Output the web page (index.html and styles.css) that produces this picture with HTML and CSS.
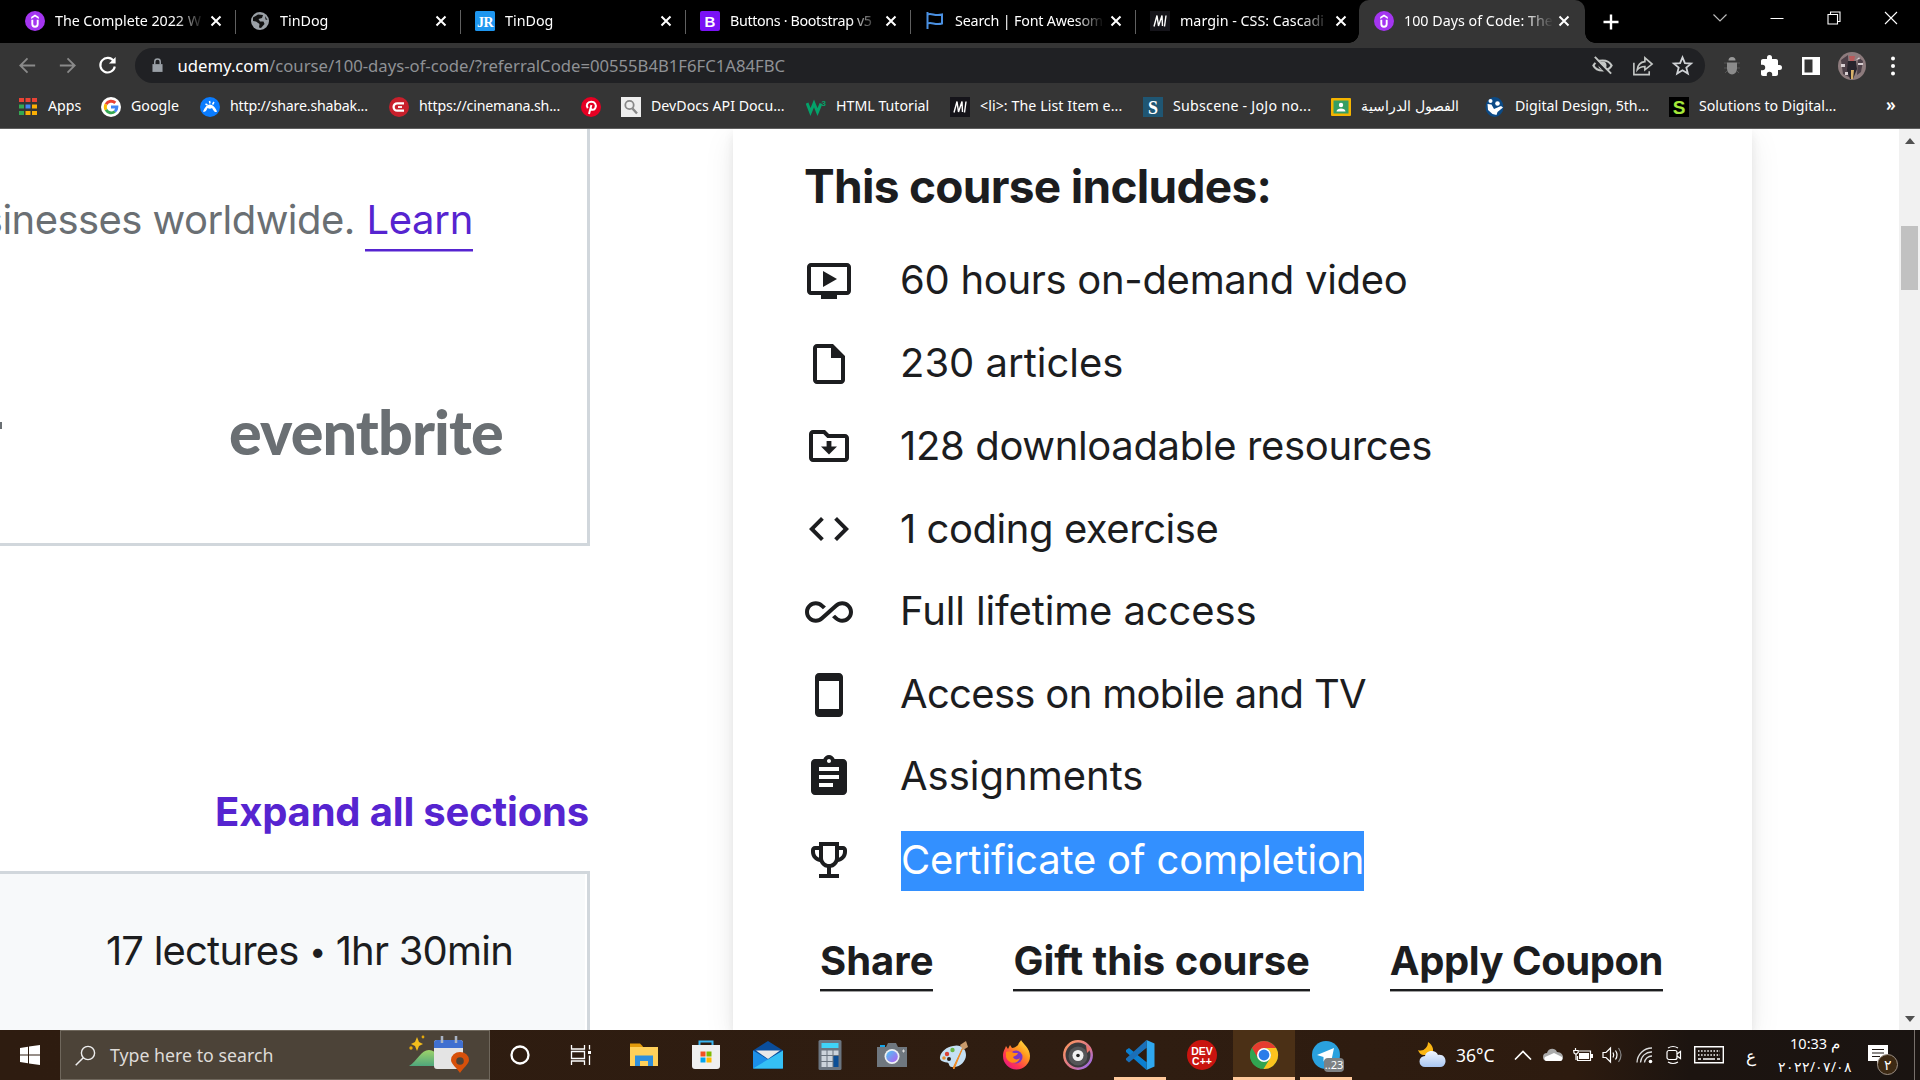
FILE: index.html
```html
<!DOCTYPE html>
<html lang="en">
<head>
<meta charset="utf-8">
<title>100 Days of Code</title>
<link rel="stylesheet" href="styles.css">
</head>
<body>
<svg width="0" height="0" class="defs">
  <defs>
    <symbol id="udemy" viewBox="0 0 20 20"><circle cx="10" cy="10" r="10" fill="#a435f0"/><path d="M6.200 6 10 3.500 13.800 6v2L10 5.600 6.200 8z" fill="#fff"/><path d="M7.300 8.800v4.200a2.700 2.700 0 0 0 5.400 0V8.800" fill="none" stroke="#fff" stroke-width="1.900"/></symbol>
    <symbol id="x" viewBox="0 0 12 12"><path d="M1.500 1.500l9 9M10.500 1.500l-9 9" stroke="#fff" stroke-width="2" fill="none"/></symbol>
    <symbol id="mdn" viewBox="0 0 20 20"><path d="M0 0h20v20H0z" fill="#15141a"/><path d="M4 15.500 7 4.500 8.500 15 12 4.500 12.500 15M16 4.500 14.500 15.500" fill="none" stroke="#fff" stroke-width="1.400"/></symbol>
    <linearGradient id="ff" x1="1" y1="0" x2="0.200" y2="1"><stop offset="0" stop-color="#fff44f"/><stop offset=".4" stop-color="#ff9a1e"/><stop offset=".75" stop-color="#ff3750"/><stop offset="1" stop-color="#e31587"/></linearGradient>
    <linearGradient id="mu" x1="0" y1="0" x2="1" y2="1"><stop offset="0" stop-color="#ff9a5c"/><stop offset=".6" stop-color="#d9738f"/><stop offset="1" stop-color="#8a6bff"/></linearGradient>
    <linearGradient id="ca" x1="0" y1="0" x2="1" y2="1"><stop offset="0" stop-color="#4cc8f4"/><stop offset="1" stop-color="#b45cf0"/></linearGradient>
    <linearGradient id="hill" x1="0" y1="0" x2="0" y2="1"><stop offset="0" stop-color="#9ed36a"/><stop offset="1" stop-color="#4fa67c"/></linearGradient>
    <linearGradient id="cloud" x1="0" y1="0" x2="0" y2="1"><stop offset="0" stop-color="#f2f7ff"/><stop offset="1" stop-color="#a9c6f2"/></linearGradient>
  </defs>
</svg>

<header class="tabs">
  <div class="tab"><svg class="fav"><use href="#udemy"/></svg><span class="title f1">The Complete 2022 W</span><svg class="close"><use href="#x"/></svg></div>
  <div class="tab"><svg class="fav" viewBox="0 0 20 20"><circle cx="10" cy="10" r="9" fill="#9aa0a6"/><path d="M3 6.500 8 3.500l5 .5-1 3-3.500 1 1.500 2.500h3.500l1 2.500-3.500 4-2-.5.5-3.500L6 10.500 3 10zM15 5l2.500 4-2-.500z" fill="#111"/></svg><span class="title">TinDog</span><svg class="close"><use href="#x"/></svg></div>
  <div class="tab"><svg class="fav" viewBox="0 0 20 20"><rect width="20" height="20" rx="1.500" fill="#1e96ef"/><text x="10" y="15.500" class="jr">JR</text></svg><span class="title">TinDog</span><svg class="close"><use href="#x"/></svg></div>
  <div class="tab"><svg class="fav" viewBox="0 0 20 20"><rect width="20" height="20" rx="2" fill="#7a12f5"/><text x="10" y="15.500" class="bs">B</text></svg><span class="title f4">Buttons · Bootstrap v5</span><svg class="close"><use href="#x"/></svg></div>
  <div class="tab"><svg class="fav" viewBox="0 0 20 20"><path d="M2.500 1v17M2.500 3.500c4-2 7 2 14.500 0v9c-7 2-10.500-2-14.500 0" fill="none" stroke="#4a90e2" stroke-width="2"/></svg><span class="title f5">Search | Font Awesom</span><svg class="close"><use href="#x"/></svg></div>
  <div class="tab"><svg class="fav"><use href="#mdn"/></svg><span class="title f6">margin - CSS: Cascadi</span><svg class="close"><use href="#x"/></svg></div>
  <div class="tab active"><svg class="fav"><use href="#udemy"/></svg><span class="title f7">100 Days of Code: The</span><svg class="close"><use href="#x"/></svg></div>
  <svg class="plus" viewBox="0 0 16 16"><path d="M8 .5v15M.5 8h15" stroke="#fff" stroke-width="2.400"/></svg>
  <div class="winctl">
    <svg viewBox="0 0 16 16"><path d="M1.500 4.500 8 11l6.500-6.500" fill="none" stroke="#bbb" stroke-width="1.200"/></svg>
    <svg viewBox="0 0 16 16"><path d="M1.500 8.500h13" stroke="#fff" stroke-width="1"/></svg>
    <svg viewBox="0 0 16 16"><path d="M2 4.500h9.500v9.500H2zM4.500 4.500V2H14v9.500h-2.500" fill="none" stroke="#fff" stroke-width="1.100"/></svg>
    <svg viewBox="0 0 16 16"><path d="M2 2l12 12M14 2 2 14" stroke="#fff" stroke-width="1.100"/></svg>
  </div>
</header>

<nav class="toolbar">
  <div class="navs">
    <svg viewBox="0 0 24 24" class="dim"><path d="M20 12H5M12 4.500 4.500 12l7.500 7.500" /></svg>
    <svg viewBox="0 0 24 24" class="dim"><path d="M4 12h15M12 4.500l7.500 7.500-7.500 7.500"/></svg>
    <svg viewBox="0 0 24 24"><path d="M18.500 7.500A7.600 7.600 0 1 0 19.600 13" stroke="#fff"/><path d="M20.500 3v7h-7z" fill="#fff"/></svg>
  </div>
  <div class="omni">
    <svg class="lock" viewBox="0 0 12 16"><path d="M.5 6.500h11V15H.5z" fill="#9aa0a6"/><path d="M3 7V4a3 3 0 0 1 6 0v3" fill="none" stroke="#9aa0a6" stroke-width="1.600"/></svg>
    <span class="url"><b>udemy.com</b>/course/100-days-of-code/?referralCode=00555B4B1F6FC1A84FBC</span>
    <div class="omni-icons">
      <svg viewBox="0 0 24 24"><path d="M2.500 12C6 5 18 5 21.500 12 18 19 6 19 2.500 12z" fill="none" stroke="#c4c7c5" stroke-width="2.200"/><circle cx="12" cy="12" r="4.200" fill="#c4c7c5"/><path d="M3 5.500 18.500 21" stroke="#202124" stroke-width="3"/><path d="M4 3 21 20.500" stroke="#c4c7c5" stroke-width="2"/></svg>
      <svg viewBox="0 0 24 24" fill="none" stroke="#c4c7c5" stroke-width="1.700"><path d="M3 9v12.500h16V18"/><path d="M6.500 16.500c.5-5 3.500-8 8-8.500V4l7.500 6.500-7.500 6V13c-3.500 0-6 1-8 3.500z"/></svg>
      <svg viewBox="0 0 24 24"><path d="M12 3.500l2.500 6 6.500.500-5 4.200 1.600 6.300L12 17l-5.600 3.500L8 14.200 3 10l6.500-.500z" fill="none" stroke="#d0d3d6" stroke-width="1.900"/></svg>
    </div>
  </div>
  <div class="ext">
    <svg viewBox="0 0 24 24"><path d="M4 9h3M4 14h3M17 9h3M17 14h3M5 19l2-2M19 19l-2-2" stroke="#555" stroke-width="1"/><path d="M8.500 6.500a3.500 3.500 0 0 1 7 0z" fill="#999"/><path d="M7 8.500h10v6a5 6 0 0 1-10 0z" fill="#8b8b8b"/></svg>
    <svg viewBox="0 0 24 24"><path d="M20.500 11H19V7c0-1.100-.9-2-2-2h-4V3.500a2.500 2.500 0 0 0-5 0V5H4c-1.100 0-2 .9-2 2v3.800h1.500a2.700 2.700 0 0 1 0 5.400H2V20c0 1.100.9 2 2 2h3.800v-1.500a2.700 2.700 0 0 1 5.400 0V22H17c1.100 0 2-.9 2-2v-4h1.500a2.500 2.500 0 0 0 0-5z" fill="#fff"/></svg>
    <svg viewBox="0 0 24 24"><path d="M3 3h18v18H3zM5.500 5.500v13h8v-13z" fill="#fff" fill-rule="evenodd"/></svg>
    <svg viewBox="0 0 28 28" class="ava"><circle cx="14" cy="14" r="14" fill="#8d7b7d"/><path d="M3 8l7-5 1 22-6-3zM20 5l5 4-2 11-4 3z" fill="#4d4048"/><path d="M10 9h8l1 8-4 10h-3l-3-9z" fill="#28242c"/><path d="M11 4h6l-1 5h-4z" fill="#b95b5c"/><path d="M13 18h3l-1 9h-2z" fill="#d9b169"/><path d="M3 12h4v3H3zM20 11h5v2h-5zM7 20h3v3H7zM18 8l3-3 1 2z" fill="#d8cfd2"/></svg>
    <svg viewBox="0 0 24 24"><g fill="#fff"><circle cx="12" cy="4.500" r="2"/><circle cx="12" cy="12" r="2"/><circle cx="12" cy="19.500" r="2"/></g></svg>
  </div>
</nav>

<nav class="marks">
  <a><svg viewBox="0 0 20 20"><g><path d="M0 1h5v4H0zM6.500 1h5v4h-5zM13 1h5v4h-5z" fill="#ea4335"/><path d="M0 7.500h5v4H0zM0 14h5v4H0z" fill="#34a853"/><path d="M6.500 7.500h5v4h-5z" fill="#4285f4"/><path d="M13 7.500h5v4h-5zM6.500 14h5v4h-5zM13 14h5v4h-5z" fill="#fbaf05"/></g></svg><span>Apps</span></a>
  <a><svg viewBox="0 0 20 20"><circle cx="10" cy="10" r="10" fill="#fff"/><g fill="none" stroke-width="2.900"><path d="M14.300 5.900A5.900 5.900 0 0 0 5 7.200" stroke="#ea4335"/><path d="M5 7.200a5.900 5.900 0 0 0 0 5.600" stroke="#fbbc05"/><path d="M5 12.800a5.900 5.900 0 0 0 8.900 1.700" stroke="#34a853"/><path d="M13.900 14.500A5.900 5.900 0 0 0 15.900 10H10" stroke="#4285f4"/></g></svg><span>Google</span></a>
  <a><svg viewBox="0 0 20 20"><circle cx="10" cy="10" r="10" fill="#0a7cff"/><path d="M3 14.500C5 9.500 8 7 10 7.500c2.500 0 5.500 3 7 7-2 1.500-3.500-.5-5-3.500-1 1-3 1-4.500 0C6.500 14 5 15.500 3 14.500z" fill="#fff"/><path d="M5.500 7l2 1M9.500 4l.5 2.500M14 5l-1.500 2.500" stroke="#fff" stroke-width="1.500"/></svg><span>http://share.shabak...</span></a>
  <a><svg viewBox="0 0 20 20"><circle cx="10" cy="10" r="10" fill="#c8202c"/><path d="M15 6.300H8.300a3.600 3.600 0 0 0 0 7.400H15" fill="none" stroke="#fff" stroke-width="2.300"/><path d="M9 10h4" stroke="#fff" stroke-width="1.800"/></svg><span>https://cinemana.sh...</span></a>
  <a><svg viewBox="0 0 20 20"><circle cx="10" cy="10" r="10" fill="#e60023"/><path d="M6.800 11.200C4.500 8 6.500 4.800 10.200 4.800c4 0 5.400 3.200 4.200 6-1.200 2.700-4 2.500-4.400.700M10.400 8 8 17" fill="none" stroke="#fff" stroke-width="2"/></svg></a>
  <a><svg viewBox="0 0 20 20"><path d="M0 0h20v20H0z" fill="#eee"/><circle cx="8.500" cy="8" r="4.200" fill="none" stroke="#888" stroke-width="1.800"/><path d="M11.500 11.500 16 16.500" stroke="#888" stroke-width="2.400"/></svg><span>DevDocs API Docu...</span></a>
  <a><svg viewBox="0 0 20 20"><path d="M1 6l3.500 9L8 6.500l3.500 8.500L15 6.500" fill="none" stroke="#04a26a" stroke-width="3"/><text x="15.500" y="8.500" class="w3">3</text></svg><span>HTML Tutorial</span></a>
  <a><svg><use href="#mdn"/></svg><span>&lt;li&gt;: The List Item e...</span></a>
  <a><svg viewBox="0 0 20 20"><path d="M0 0h20v20H0z" fill="#1f5673"/><text x="10" y="16.500" class="sub">S</text></svg><span>Subscene - JoJo no...</span></a>
  <a><svg viewBox="0 0 20 20"><rect y="1" width="20" height="18" rx="1" fill="#f4b400"/><path d="M2.500 3.500h15v13h-15z" fill="#359e63"/><circle cx="10" cy="8" r="2.200" fill="#fff"/><path d="M5.500 14.500c0-4 9-4 9 0z" fill="#fff"/></svg><span class="ar">الفصول الدراسية</span></a>
  <a><svg viewBox="0 0 20 20"><ellipse cx="9.500" cy="10" rx="9" ry="10" fill="#0b4a86"/><circle cx="5.500" cy="4" r="2" fill="#fff"/><circle cx="12.500" cy="6.500" r="2.300" fill="#fff"/><path d="M2.500 7l4 .5 2.500 4.500 7-3 2 1.500-5.500 4.500-1 3-4-1-4.500-4z" fill="#fff"/></svg><span>Digital Design, 5th...</span></a>
  <a><svg viewBox="0 0 20 20"><path d="M0 0h20v20H0z"/><text x="10" y="17" class="sol">S</text></svg><span>Solutions to Digital...</span></a>
  <a class="more">»</a>
</nav>

<main class="page">
  <section class="left">
    <div class="business">
      <p class="worldwide">sinesses worldwide. <a class="learn">Learn</a></p>
      <div class="logos"><i class="frag"></i><span class="eventbrite">eventbrite</span></div>
    </div>
    <div class="expand">Expand all sections</div>
    <div class="panel"><div class="panel-head">17 lectures <b>•</b> 1hr 30min</div></div>
  </section>
  <section class="card">
    <h2>This course includes:</h2>
    <ul>
      <li><svg viewBox="0 0 24 24"><path d="M21 3H3c-1.110 0-2 .89-2 2v12c0 1.100.89 2 2 2h5v2h8v-2h5c1.100 0 1.990-.9 1.990-2L23 5c0-1.110-.9-2-2-2zm0 14H3V5h18v12zm-5-6l-7 4V7z"/></svg><span>60 hours on-demand video</span></li>
      <li><svg viewBox="0 0 24 24"><path d="M6 2c-1.100 0-2 .9-2 2v16c0 1.100.9 2 2 2h12c1.100 0 2-.9 2-2V8l-6-6H6zm0 2h7v5h5v11H6V4z" fill-rule="evenodd"/></svg><span>230 articles</span></li>
      <li><svg viewBox="0 0 24 24"><path d="M20 6h-8l-2-2H4c-1.100 0-2 .9-2 2v12c0 1.100.9 2 2 2h16c1.100 0 2-.9 2-2V8c0-1.100-.9-2-2-2zm0 12H4V6h5.170l2 2H20v10zM12 16.200l-4-4h2.800v-2.700h2.400v2.700H16z" fill-rule="evenodd"/></svg><span>128 downloadable resources</span></li>
      <li><svg viewBox="0 0 24 24"><path d="M9.400 16.600L4.800 12l4.600-4.600L8 6l-6 6 6 6 1.400-1.400zm5.200 0l4.600-4.600-4.600-4.600L16 6l6 6-6 6-1.400-1.400z"/></svg><span>1 coding exercise</span></li>
      <li><svg viewBox="0 0 24 24"><path d="M18.600 6.620c-1.440 0-2.800.56-3.770 1.530L12 10.660 10.480 12h.01L7.800 14.390c-.64.64-1.490.99-2.400.99-1.870 0-3.390-1.510-3.390-3.380S3.530 8.620 5.400 8.620c.91 0 1.760.35 2.440 1.030l1.130 1 1.510-1.340L9.220 8.200C8.200 7.180 6.840 6.620 5.400 6.620 2.420 6.620 0 9.040 0 12s2.420 5.380 5.400 5.380c1.440 0 2.800-.56 3.770-1.530l2.830-2.500.01.01L13.520 12h-.01l2.690-2.390c.64-.64 1.490-.99 2.400-.99 1.870 0 3.390 1.510 3.390 3.380s-1.520 3.380-3.390 3.380c-.9 0-1.760-.35-2.440-1.030l-1.140-1.010-1.510 1.340 1.270 1.120c1.020 1.010 2.370 1.570 3.820 1.570 2.980 0 5.400-2.410 5.400-5.380s-2.420-5.370-5.400-5.370z"/></svg><span>Full lifetime access</span></li>
      <li><svg viewBox="0 0 24 24"><path d="M17 1.010L7 1c-1.100 0-2 .9-2 2v18c0 1.100.9 2 2 2h10c1.100 0 2-.9 2-2V3c0-1.100-.9-1.990-2-1.990zM17 19H7V5h10v14z"/></svg><span>Access on mobile and TV</span></li>
      <li><svg viewBox="0 0 24 24"><path d="M19 3h-4.180C14.400 1.840 13.300 1 12 1c-1.300 0-2.400.84-2.820 2H5c-1.100 0-2 .9-2 2v14c0 1.100.9 2 2 2h14c1.100 0 2-.9 2-2V5c0-1.100-.9-2-2-2zm-7 0c.55 0 1 .45 1 1s-.45 1-1 1-1-.45-1-1 .45-1 1-1zm2 14H7v-2h7v2zm3-4H7v-2h10v2zm0-4H7V7h10v2z"/></svg><span>Assignments</span></li>
      <li><svg viewBox="0 0 24 24"><path d="M19 5h-2V3H7v2H5c-1.100 0-2 .9-2 2v1c0 2.550 1.920 4.630 4.390 4.940.63 1.500 1.980 2.630 3.610 2.960V19H7v2h10v-2h-4v-3.100c1.630-.33 2.980-1.460 3.610-2.960C19.080 12.630 21 10.550 21 8V7c0-1.100-.9-2-2-2zM5 8V7h2v3.820C5.840 10.400 5 9.300 5 8zm7 6c-1.650 0-3-1.350-3-3V5h6v6c0 1.650-1.350 3-3 3zm7-6c0 1.300-.84 2.400-2 2.820V7h2v1z"/></svg><span class="sel">Certificate of completion</span></li>
    </ul>
    <div class="actions"><a>Share</a><a>Gift this course</a><a>Apply Coupon</a></div>
  </section>
  <div class="scroll">
    <svg viewBox="0 0 10 6"><path d="M5 0l5 6H0z" fill="#505050"/></svg>
    <i class="thumb"></i>
    <svg viewBox="0 0 10 6"><path d="M5 6l5-6H0z" fill="#505050"/></svg>
  </div>
</main>

<footer class="taskbar">
  <div class="start"><svg width="20" height="20" viewBox="0 0 20 20"><path d="M0 3l8-1.200v7.700H0zM9 1.600 20 0v9.500H9zM0 10.500h8v7.700L0 17zM9 10.500h11V20L9 18.400z" fill="#fff"/></svg></div>
  <div class="search">
    <svg width="21" height="21" viewBox="0 0 21 21"><circle cx="13" cy="8" r="6.600" fill="none" stroke="#eee" stroke-width="1.400"/><path d="M8.300 12.700.7 20.300" stroke="#eee" stroke-width="1.500"/></svg>
    <span>Type here to search</span>
    <svg class="art" width="62" height="40" viewBox="0 0 62 40"><path d="M0 31C8 26 12 15 20 15s12 10 16 16z" fill="url(#hill)"/><path d="M8 2l2 5 4 2-4 2-2 5-2-5-4-2 4-2z" fill="#f2bd1d"/><circle cx="14" cy="2" r="1.400" fill="#e5a90c"/><circle cx="2" cy="13" r="1.700" fill="#e5a90c"/><rect x="25" y="5" width="29" height="29" rx="3" fill="#e4e4e4"/><path d="M25 13V8a3 3 0 0 1 3-3h23a3 3 0 0 1 3 3v5z" fill="#3f6fd0"/><path d="M33 1v7M47 1v7" stroke="#a9b4c4" stroke-width="2.500"/><path d="M51 38c-3-5-9-9-9-13a9 8 0 0 1 18 0c0 4-6 8-9 13z" fill="#d6500a"/><circle cx="51" cy="26" r="3.800" fill="#4c4338"/></svg>
  </div>
  <div class="apps">
    <div><svg viewBox="0 0 30 30"><circle cx="15" cy="15" r="8.500" fill="none" stroke="#fff" stroke-width="2.300"/></svg></div>
    <div><svg viewBox="0 0 30 30" fill="none" stroke="#fff" stroke-width="1.300"><path d="M5.500 5v4h13V5M5.500 25v-4h13v4M5.500 11.500h13v7h-13zM23.500 5v4.500M23.500 15.500V25"/><path d="M22 11h3v3h-3z" fill="#fff" stroke="none"/></svg></div>
    <div><svg viewBox="0 0 30 30"><path d="M1 3.500h10l3 3v3H1z" fill="#e29a0b"/><path d="M1 7h28v19H1z" fill="#ffd05a"/><path d="M6 26V15.500h18V26h-5v-5h-8v5z" fill="#2f8fdc"/></svg></div>
    <div><svg viewBox="0 0 30 30"><path d="M8.500 8V1.500h13V8" fill="none" stroke="#39b5f2" stroke-width="2"/><path d="M1 5h28v21a3 3 0 0 1-3 3H4a3 3 0 0 1-3-3z" fill="#efefef"/><path d="M9.500 11.500h5v5h-5z" fill="#f25022"/><path d="M15.500 11.500h5v5h-5z" fill="#7fba00"/><path d="M9.500 17.500h5v5h-5z" fill="#00a4ef"/><path d="M15.500 17.500h5v5h-5z" fill="#ffb900"/></svg></div>
    <div><svg viewBox="0 0 30 30"><path d="M0 10.500 15 1l15 9.500V20H0z" fill="#0a4d9b"/><path d="M0 10.500 30 28.500H0z" fill="#1c8fe8"/><path d="M30 10.500 0 28.500h30z" fill="#35c0f5"/><path d="M3 10.500h24L15 19z" fill="#e9e9e9"/></svg></div>
    <div><svg viewBox="0 0 30 30"><rect x="3.500" width="23" height="30" rx="1.500" fill="#6b7580"/><path d="M6.500 3h17v5h-17z" fill="#40d3f7"/><path d="M6.500 10.500h5v4.500h-5zM12.500 10.500h5v4.500h-5zM18.500 10.500h5v4.500h-5zM6.500 16h5v5h-5zM12.500 16h5v5h-5zM6.500 22h5v5h-5zM12.500 22h5v5h-5z" fill="#ccd4dc"/><path d="M18.500 16h5v11h-5z" fill="#0b4f97"/></svg></div>
    <div><svg viewBox="0 0 30 30"><path d="M3 5h5v3H3z" fill="#16a5e8"/><path d="M0 7h9l2-4h8l2 4h9v20H0z" fill="#6f777f"/><circle cx="15" cy="16.500" r="7.500" fill="#eceff2"/><circle cx="15" cy="16.500" r="5.800" fill="url(#ca)"/><path d="M26.500 9.500v3M25 11h3" stroke="#ddd"/></svg></div>
    <div><svg viewBox="0 0 30 30"><path d="M14 6c7-2 13 2 13 9 0 6-6 13-14 12-4-.5-2-4-5-4.500C3 22 .5 20 1 17 2 11 8 7 14 6z" fill="#c5e0f4"/><circle cx="8" cy="14" r="2.200" fill="#d94136"/><circle cx="13.500" cy="10" r="2.200" fill="#68b646"/><circle cx="5" cy="18" r="1.800" fill="#e58d2f"/><circle cx="10" cy="19" r="2" fill="#2b2018"/><path d="M25 5 15 29l-1-1z" fill="#f08a24" stroke="#f08a24"/><path d="M21 5l6-4 2 6-5 3z" fill="#c89a6b"/></svg></div>
    <div><svg viewBox="0 0 30 30"><path d="M17 5c1-3 3-4 3-5 2 4 9 8 9 16a13.500 13.500 0 0 1-27 0c0-5 2-7 3-10l2 3 2-4 2 3c2 0 4-1 6-3z" fill="url(#ff)"/><circle cx="15" cy="17" r="6.500" fill="#7a35c8"/><path d="M5 12c3-1 6 0 8 1l4 0c-1 3-4 3-5 4 1 3 5 3 7 1-2 7-12 6-14-1z" fill="#ff8a16"/></svg></div>
    <div><svg viewBox="0 0 30 30"><circle cx="15" cy="15" r="13.700" fill="#3a3a3c" stroke="url(#mu)" stroke-width="2.500"/><circle cx="15" cy="16" r="9.500" fill="#565658"/><circle cx="15" cy="15.500" r="5.500" fill="#f0f0f0"/><circle cx="15" cy="15.500" r="1.800" fill="#222"/><path d="M23 5l5 4-4 4z" fill="#e8756b"/></svg></div>
    <div class="run"><svg viewBox="0 0 30 30"><path d="M21.500 0 29.500 3.500v23L21.500 30z" fill="#2fa8f0"/><path d="M1 10 4 8l17.500 14v8L1 12z" fill="#0b7fd0"/><path d="M1 20l3 2.500L21.500 8V0L1 18.500z" fill="#1a6fb8"/><path d="M21.500 8v14L13 15z" fill="#2d1c10"/></svg></div>
    <div><svg viewBox="0 0 30 30"><circle cx="15" cy="15" r="15" fill="#c9140f"/><text x="15" y="14.500" class="dev">DEV</text><text x="15" y="25" class="dev">C++</text></svg></div>
    <div class="run on"><svg viewBox="0 0 30 30"><circle cx="15" cy="15" r="14" fill="#31a451"/><path d="M2.900 8A14 14 0 0 1 27.100 8H15a7 7 0 0 0-6 3.500z" fill="#e53c2f"/><path d="M2.900 8 9 18.500 15 15V8z" fill="#e53c2f"/><path d="M2.900 8l6 10.500A7 7 0 0 0 15 22l-3 6.700A14 14 0 0 1 2.900 8z" fill="#31a451"/><path d="M27.100 8H15a7 7 0 0 1 6 10.500L14.500 29A14 14 0 0 0 27.100 8z" fill="#fcc31e"/><circle cx="15" cy="15" r="7" fill="#fff"/><circle cx="15" cy="15" r="5.400" fill="#2a7de9"/></svg></div>
    <div class="run"><svg viewBox="0 0 30 30"><circle cx="15" cy="15" r="14" fill="#2aa1de"/><path d="M6 15 23 8l-3 14.500-5-3.500-2.500 2.500V17z" fill="#fff"/></svg><em>..23</em></div>
  </div>
  <div class="tray">
    <svg class="wx" viewBox="0 0 28 28"><path d="M10 1c5 3 7 9 3 13H6C3 14 1 12 0 9c5 2 10-2 10-8z" fill="#fbb614"/><path d="M7 26a5.500 5.500 0 0 1 0-11c1-6 11-7 13-1 5-1 8 3 7.500 7-.5 3-2.500 5-5.500 5z" fill="url(#cloud)"/></svg>
    <span class="temp">36°C</span>
    <svg class="chev" viewBox="0 0 18 10"><path d="M1 9.500 9 1.500l8 8" fill="none" stroke="#fff" stroke-width="1.600"/></svg>
    <svg class="od" viewBox="0 0 20 14"><path d="M4 13a4 4 0 0 1 0-8C5 0 12-1 14 4c4 0 6 3 6 5s-1 4-3 4z" fill="#aaa"/><path d="M3 13c-2-1-2-3-1-4l9-4 8 4c1 2 0 4-2 4z" fill="#fff"/></svg>
    <svg class="bat" viewBox="0 0 20 16"><path d="M6 4h11.500v9.500H4.500V9" fill="none" stroke="#fff" stroke-width="1.200"/><path d="M6 6h10v6H6zM18 7h2v4h-2z" fill="#fff"/><path d="M2.500 1v2.500M.7 3.500h4.500v2L3 7.500 1 6zM3 7v6" fill="none" stroke="#fff" stroke-width="1.200"/></svg>
    <svg class="vol" viewBox="0 0 21 18"><path d="M1 6.500h3L8.500 2v14L4 11.500H1z" fill="none" stroke="#fff" stroke-width="1.200"/><path d="M11 6.500q1.500 2.500 0 5M13.500 4.500q3 4.500 0 9" fill="none" stroke="#fff" stroke-width="1.200"/><path d="M16.500 2q5 7 0 14" fill="none" stroke="#888" stroke-width="1.200"/></svg>
    <svg class="wifi" viewBox="0 0 17 17"><circle cx="14.500" cy="14.500" r="1.800" fill="#fff"/><path d="M1 15.500A15 15 0 0 1 16 1M4.500 15.500A11 11 0 0 1 16 5M8.500 15.500A7.500 7.500 0 0 1 16 9" fill="none" stroke="#ddd" stroke-width="1.300"/></svg>
    <svg class="cam" viewBox="0 0 16 20"><rect x="1" y="5.500" width="10" height="9" rx="2" fill="none" stroke="#fff" stroke-width="1.200"/><path d="M11 9l3.500-2.500v7L11 11M2 3q5-3 10 0M2 17q5 3 10 0" fill="none" stroke="#fff" stroke-width="1.200"/></svg>
    <svg class="kb" viewBox="0 0 30 18"><path d="M.7.700h28.600v16H.7z" fill="none" stroke="#fff" stroke-width="1.400"/><path d="M4 5h22M4 9h22" stroke="#fff" stroke-width="1.500" stroke-dasharray="1.500 1.600"/><path d="M4 13h3M9 13h12M23 13h3" stroke="#fff" stroke-width="1.300"/></svg>
    <span class="lang">ع</span>
    <div class="clock"><span>10:33 م</span><span class="date">٢٠٢٢/٠٧/٠٨</span></div>
    <div class="note"><svg viewBox="0 0 20 20"><path d="M0 0h20v16h-6l-5 4v-4H0z" fill="#fff"/><path d="M4 4.500h12M4 8h12M4 11.500h8" stroke="#1d1612" stroke-width="1.200"/></svg><em>٢</em></div>
    <i class="peek"></i>
  </div>
</footer>
</body>
</html>
```
FILE: styles.css
```css
* { box-sizing: border-box; }
body { margin: 0; width: 1920px; height: 1080px; overflow: hidden; display: flex; flex-direction: column; background: #fff; font-family: "Noto Sans", "Liberation Sans", sans-serif; }
.defs { position: absolute; }
svg { flex: none; display: block; }

/* tab strip */
.tabs { height: 43px; flex: none; background: #000; display: flex; align-items: center; padding-left: 10px; color: #fff; font-size: 14.300px; }
.tab { width: 225px; height: 43px; flex: none; display: flex; align-items: center; padding: 0 0 1px 15px; position: relative; }
.tab::after { content: ""; position: absolute; right: -1px; top: 10px; width: 1px; height: 24px; background: #606060; }
.tab:nth-child(6)::after, .tab.active::after { display: none; }
.fav { width: 20px; height: 20px; margin-right: 10px; }
.title { width: 150px; height: 22px; line-height: 21px; white-space: nowrap; -webkit-mask-image: linear-gradient(90deg, #000 121px, transparent 149px); mask-image: linear-gradient(90deg, #000 121px, transparent 149px); }
.f1 { letter-spacing: -.05px; }
.f4 { letter-spacing: -.350px; }
.f5 { letter-spacing: -.180px; }
.close { width: 12px; height: 12px; margin-left: 5px; }
.tab.active { background: #353535; border-radius: 10px 10px 0 0; margin-left: -1px; width: 226px; padding-left: 15px; }
.tab.active .close { margin-left: 4px; }
.tab.active::before { content: ""; position: absolute; left: -10px; right: -10px; bottom: 0; height: 10px; background: radial-gradient(circle at 0 0, #000 9.500px, #353535 10px) left / 10px 10px no-repeat, radial-gradient(circle at 100% 0, #000 9.500px, #353535 10px) right / 10px 10px no-repeat; }
.plus { width: 16px; height: 16px; margin-left: 18px; }
.winctl { margin-left: auto; display: flex; gap: 41px; padding-right: 21px; height: 36px; align-items: center; align-self: flex-start; }
.winctl svg { width: 16px; height: 16px; }
.jr { font: bold 14px "Liberation Serif", serif; fill: #fff; text-anchor: middle; letter-spacing: -.5px; }
.bs { font: bold 15px "Liberation Sans", sans-serif; fill: #fff; text-anchor: middle; }
.w3 { font: bold 8px "Liberation Sans", sans-serif; fill: #04a26a; }
.sub { font: bold 18px "Liberation Serif", serif; fill: #fff; text-anchor: middle; }
.sol { font: bold 19px "Liberation Sans", sans-serif; fill: #a5e83a; text-anchor: middle; }
.dev { font: bold 10.500px "Liberation Sans", sans-serif; fill: #fff; text-anchor: middle; }

/* toolbar */
.toolbar { height: 45px; flex: none; background: #353535; display: flex; align-items: center; padding-left: 16px; }
.navs { display: flex; gap: 17px; width: 119px; }
.navs svg { width: 23px; height: 23px; fill: none; stroke: none; }
.navs path:first-child { stroke-width: 2.200; }
.navs .dim path { stroke: #8a8a8a; stroke-width: 1.900; }
.omni { width: 1570px; height: 35px; border-radius: 18px; background: #202124; display: flex; align-items: center; padding: 0 11px 0 17px; }
.lock { width: 11px; height: 15px; margin-right: 15px; }
.url { font-size: 16.680px; color: #8f9195; white-space: nowrap; line-height: 30px; margin-left: -.5px; }
.url b { font-weight: 400; color: #fff; }
.omni-icons { margin-left: auto; display: flex; gap: 17px; }
.omni-icons svg { width: 23px; height: 23px; }
.ext { display: flex; flex: 1; justify-content: space-between; align-items: center; padding: 0 15px; }
.ext svg { width: 24px; height: 24px; }
.ext .ava { width: 28px; height: 28px; }

/* bookmarks */
.marks { height: 41px; flex: none; background: #353535; border-bottom: 1px solid #5f5f5f; padding: 0 0 3px 19px; display: grid; grid-template-columns: 82px 99px 189px 192px 40px 185px 144px 193px 188px 154px 184px 218px 20px; align-items: center; color: #fff; font-size: 14.200px; }
.marks a { display: flex; align-items: center; gap: 10px; white-space: nowrap; }
.marks svg { width: 20px; height: 20px; }
.marks span { padding-bottom: 2px; }
.marks a:first-child { gap: 9px; }
.marks .more { font-size: 17px; font-weight: 600; padding-bottom: 5px; margin-left: -1px; }
.marks a:nth-child(3) span { letter-spacing: -.2px; }
.marks a:nth-child(4) span { letter-spacing: -.170px; }
.marks a:nth-child(8) span { letter-spacing: .08px; }
.marks a:nth-child(9) span { letter-spacing: .25px; }
.marks .ar { font-size: 14.200px; }

/* page */
.page { height: 901px; flex: none; display: flex; overflow: hidden; font-family: Inter, "Liberation Sans", sans-serif; font-size: 40px; color: #1c1d1f; background: #fff; }
.left { width: 590px; flex: none; margin-right: 143px; }
.business { height: 417px; border: solid #d1d7dc; border-width: 0 3px 3px 0; padding-top: 65px; overflow: hidden; }
.worldwide { margin: 0; height: 60px; line-height: 52px; width: 473px; display: flex; justify-content: flex-end; white-space: pre; color: #6a6f73; letter-spacing: -.550px; }
.learn { color: #5624d0; height: 57px; border-bottom: 2px solid #5624d0; box-shadow: 0 1px #ab92e8; padding-left: 1px; letter-spacing: -.300px; }
.logos { display: flex; align-items: center; padding-top: 138px; margin-top: 5px; }
.frag { width: 2px; height: 7px; background: #6a6f73; margin-top: -14px; }
.eventbrite { font: 900 61px/70px Lato, sans-serif; color: #6a6f73; margin-left: 227px; letter-spacing: -.850px; }
.expand { margin-top: 241px; height: 84px; line-height: 50px; text-align: right; padding-right: 1px; color: #5624d0; font-weight: 700; letter-spacing: -.180px; }
.panel { height: 160px; border: solid #d1d7dc; border-width: 3px 3px 0 0; padding-right: 2px; }
.panel-head { height: 157px; background: #f7f9fa; padding: 52px 72px 0 0; text-align: right; line-height: 50px; letter-spacing: -.800px; white-space: nowrap; }
.panel-head b { font-weight: 400; font-size: 30px; position: relative; top: -3px; }
.card { width: 1019px; flex: none; padding: 29px 0 0 71px; background: #fff; box-shadow: 0 5px 10px rgba(0,0,0,.08), 0 10px 30px rgba(0,0,0,.08); }
.card h2 { margin: 0 0 36.500px; font-size: 46px; line-height: 56px; font-weight: 700; letter-spacing: -.700px; }
.card ul { margin: 0; padding: 0 0 0 1px; list-style: none; }
.card li { height: 82.930px; display: flex; align-items: flex-start; gap: 47px; letter-spacing: -.300px; }
.card li svg { width: 48px; height: 48px; margin-top: 6px; fill: #1c1d1f; }
.card li span { line-height: 57px; padding-bottom: 3px; white-space: nowrap; }
.card li:nth-child(2) { letter-spacing: 0; padding-top: 1px; }
.card li:nth-child(3) { letter-spacing: -.350px; padding-top: .6px; }
.card li:nth-child(3) svg { margin-top: 5px; }
.card li:nth-child(4) { letter-spacing: -.450px; padding-top: .8px; }
.card li:nth-child(4) svg { margin-top: 5px; }
.card li:nth-child(5) { letter-spacing: -.130px; }
.card li:nth-child(6) { letter-spacing: -.680px; }
.card li:nth-child(7) { letter-spacing: 0; }
.card li:nth-child(7) span { margin-top: -1px; }
.card li:nth-child(7) svg { margin-top: 5px; }
.card li:nth-child(8) { letter-spacing: -.200px; gap: 48px; }
.card li:nth-child(8) svg { margin-top: 5px; }
.card .sel { background: #3390ff; color: #fff; }
.actions { display: flex; gap: 80px; margin: 18px 0 0 16px; font-weight: 700; line-height: 57px; }
.actions a { border-bottom: 2px solid #1c1d1f; box-shadow: 0 1px #a0a0a0; }
.actions a:nth-child(2) { letter-spacing: -.050px; }
.actions a:last-child { letter-spacing: -.480px; }
.scroll { width: 21px; margin-left: auto; background: #f1f1f1; display: flex; flex-direction: column; align-items: center; padding: 9px 0 8px; position: relative; z-index: 1; }
.scroll svg { width: 10px; height: 6px; }
.thumb { width: 17px; height: 64px; background: #c1c1c1; margin: 82px 0 auto; }

/* taskbar */
.taskbar { height: 50px; flex: none; display: flex; color: #fff; background: linear-gradient(90deg, #2e1c10, #2f1d11 60%, #2d1b0f 82%, #1c1410 88%, #1a1411); position: relative; z-index: 2; }
.start { width: 60px; display: grid; place-items: center; }
.search { width: 430px; border: 1px solid #6f675c; background: #4c4338; display: flex; align-items: center; padding: 0 18px 0 14px; font-size: 17.760px; color: #dedbd8; white-space: nowrap; }
.search span { margin-left: 14px; }
.search .art { margin-left: auto; }
.apps { display: grid; grid-template-columns: 59px 63px repeat(12, 62px); width: 865px; }
.apps > div { display: grid; place-items: center; position: relative; }
.apps > div:nth-child(n+3) { left: 1px; }
.apps svg { width: 30px; height: 30px; }
.apps .run::after { content: ""; position: absolute; left: 5px; right: 5px; bottom: 0; height: 3px; background: #ffc99c; }
.apps .on { background: #4b3016; }
.apps .on::after { left: 0; right: 0; }
.apps em { position: absolute; left: 29px; top: 28px; width: 20px; height: 14px; border-radius: 4px; background: #7d8183; font: 11px/14px "Noto Sans", sans-serif; text-align: center; }
.tray { flex: 1; display: flex; align-items: center; padding-left: 63px; }
.wx { width: 28px; height: 28px; }
.temp { font-size: 17.500px; width: 59px; padding-left: 10px; }
.chev { width: 18px; height: 10px; margin-left: 9px; }
.od { width: 20px; height: 14px; margin-left: 11px; }
.bat { width: 20px; height: 16px; margin-left: 10px; }
.vol { width: 21px; height: 18px; margin-left: 9px; }
.wifi { width: 17px; height: 17px; margin-left: 13px; }
.cam { width: 16px; height: 20px; margin-left: 13px; }
.kb { width: 30px; height: 18px; margin-left: 12px; }
.lang { font-size: 17px; width: 34px; text-align: center; margin-left: 10px; }
.clock { width: 94px; display: flex; flex-direction: column; align-items: center; font-size: 14.500px; line-height: 23px; white-space: nowrap; }
.date { font-size: 13.700px; }
.note { position: relative; width: 20px; height: 20px; margin-left: 6px; }
.note svg { width: 20px; height: 20px; }
.note em { position: absolute; left: 9px; top: 9px; width: 21px; height: 21px; border-radius: 50%; background: #3c2913; border: 1px solid #9b8f84; font: 14px/19px "Noto Sans", sans-serif; text-align: center; }
.peek { width: 1px; height: 50px; background: #77706b; margin: 0 5px 0 auto; }
```
